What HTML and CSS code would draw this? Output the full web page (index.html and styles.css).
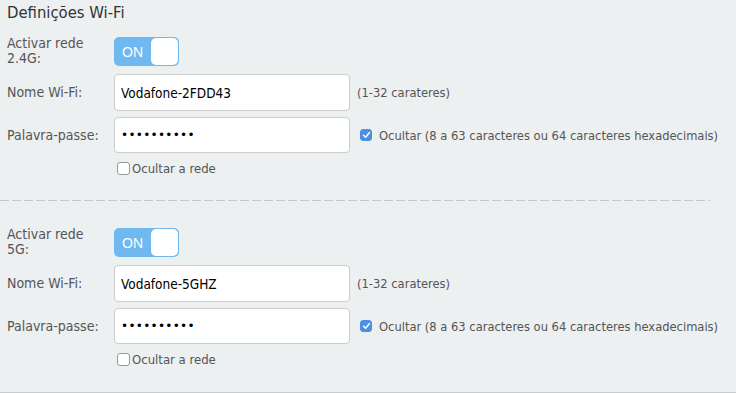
FILE: index.html
```html
<!DOCTYPE html>
<html lang="pt">
<head>
    <meta charset="UTF-8">
    <title>Definições Wi-Fi</title>
    <link rel="stylesheet" href="styles.css">
</head>
<body>
    <div class="panel">
        <h2 class="title">Definições Wi-Fi</h2>

        <div class="band first">
            <div class="row">
                <label class="lbl">Activar rede<br>2.4G:</label>
                <div class="toggle"><span class="on">ON</span><span class="knob"></span></div>
            </div>
            <div class="row field">
                <label class="lbl">Nome Wi-Fi:</label>
                <input class="txt" type="text" value="Vodafone-2FDD43">
                <span class="hint">(1-32 carateres)</span>
            </div>
            <div class="row field">
                <label class="lbl">Palavra-passe:</label>
                <input class="txt pass" type="text" value="••••••••••">
                <span class="hint check-hint"><span class="box checked"><svg width="9" height="8" viewBox="0 0 9 8"><path d="M1.5 4.2 L3.6 6.2 L7.5 1.6" fill="none" stroke="#fff" stroke-width="1.5" stroke-linecap="round" stroke-linejoin="round"/></svg></span>Ocultar (8 a 63 caracteres ou 64 caracteres hexadecimais)</span>
            </div>
            <div class="row hide-row">
                <span class="lbl"></span>
                <span class="hide"><span class="box"></span>Ocultar a rede</span>
            </div>
        </div>

        <div class="dash"></div>

        <div class="band second">
            <div class="row">
                <label class="lbl">Activar rede<br>5G:</label>
                <div class="toggle"><span class="on">ON</span><span class="knob"></span></div>
            </div>
            <div class="row field">
                <label class="lbl">Nome Wi-Fi:</label>
                <input class="txt" type="text" value="Vodafone-5GHZ">
                <span class="hint">(1-32 carateres)</span>
            </div>
            <div class="row field">
                <label class="lbl">Palavra-passe:</label>
                <input class="txt pass" type="text" value="••••••••••">
                <span class="hint check-hint"><span class="box checked"><svg width="9" height="8" viewBox="0 0 9 8"><path d="M1.5 4.2 L3.6 6.2 L7.5 1.6" fill="none" stroke="#fff" stroke-width="1.5" stroke-linecap="round" stroke-linejoin="round"/></svg></span>Ocultar (8 a 63 caracteres ou 64 caracteres hexadecimais)</span>
            </div>
            <div class="row hide-row">
                <span class="lbl"></span>
                <span class="hide"><span class="box"></span>Ocultar a rede</span>
            </div>
        </div>
    </div>
</body>
</html>
```

FILE: styles.css
```css
body {
    margin: 0;
    background-color: #ecf0f1;
    font-family: "DejaVu Sans Condensed", "DejaVu Sans", sans-serif;
    font-size: 14px;
    color: #555;
}
.panel {
    height: 392px;
    border-bottom: 1px solid #c8cccd;
}
.title {
    margin: 0;
    padding: 2px 7px 0;
    height: 28px;
    font-size: 16.5px;
    font-weight: normal;
    line-height: 22px;
    color: #333;
}
.band {
    padding: 6px 7px 24px;
}
.second {
    padding-top: 26px;
}
.row {
    display: flex;
    align-items: center;
}
.field {
    margin-top: 8px;
}
.field + .field {
    margin-top: 6px;
}
.lbl {
    width: 107px;
    flex-shrink: 0;
    line-height: 15px;
}
.toggle {
    width: 65px;
    height: 29px;
    box-sizing: border-box;
    background: #70b8f0;
    border-radius: 5px;
    display: flex;
    align-items: center;
    justify-content: space-between;
    padding: 1px;
    margin-top: 1px;
}
.on {
    color: #fff;
    font-family: "Liberation Sans", Arial, sans-serif;
    font-size: 14px;
    padding-left: 7px;
}
.knob {
    width: 27px;
    height: 27px;
    background: #fff;
    border-radius: 5px;
}
.txt {
    width: 236px;
    height: 37px;
    box-sizing: border-box;
    border: 1px solid #ccc;
    border-radius: 4px;
    background: #fff;
    padding: 0 6px;
    font-family: inherit;
    font-size: 13.5px;
    color: #000;
    margin: 0;
}
.pass {
    height: 36px;
    font-family: "DejaVu Sans", sans-serif;
    font-size: 12px;
    letter-spacing: 0.3px;
}
.hint {
    margin-left: 7px;
    font-size: 12.8px;
}
.check-hint {
    display: flex;
    align-items: center;
    margin-left: 10px;
}
.box {
    width: 12px;
    height: 12px;
    box-sizing: border-box;
    border: 1px solid #999;
    border-radius: 3px;
    background: #fff;
    margin-right: 7px;
    display: inline-flex;
    align-items: center;
    justify-content: center;
}
.box.checked {
    background: #4a90e2;
    border-color: #4a90e2;
}
.hide-row {
    margin-top: 8px;
}
.hide {
    display: flex;
    align-items: center;
    margin-left: 3px;
    font-size: 13px;
}
.hide .box {
    margin-right: 2px;
    width: 13px;
    height: 13px;
}
.dash {
    height: 1px;
    margin-right: 26px;
    background: repeating-linear-gradient(to right, #c3c8c9 0 9px, transparent 9px 12px);
}
```
